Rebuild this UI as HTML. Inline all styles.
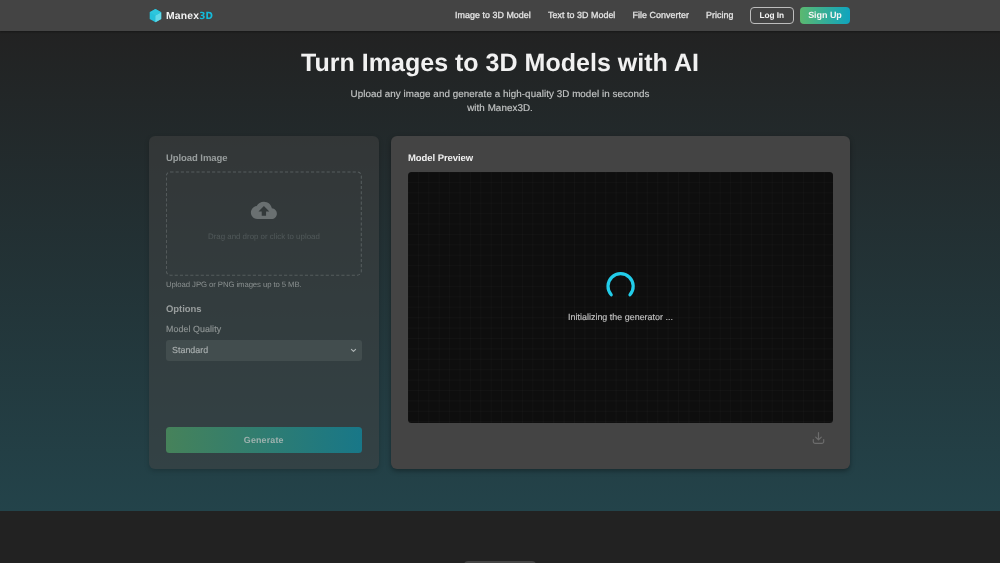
<!DOCTYPE html>
<html lang="en">
<head>
<meta charset="utf-8">
<title>Manex3D - Turn Images to 3D Models with AI</title>
<style>
*{box-sizing:border-box;margin:0;padding:0}
html,body{width:1000px;height:563px;overflow:hidden;background:#222222;font-family:"Liberation Sans",sans-serif;}
body{position:relative;will-change:transform;-webkit-font-smoothing:antialiased;text-rendering:geometricPrecision}
.header{position:absolute;left:0;top:0;width:1000px;height:31px;background:#444444;box-shadow:0 1px 2px rgba(0,0,0,.35);z-index:5}
.logo{position:absolute;left:149px;top:8px;width:14px;height:16px}
.brand{position:absolute;left:166px;top:9.5px;letter-spacing:.18px;height:13px;line-height:13px;font-size:10.35px;font-weight:700;color:#f2f2f2;white-space:nowrap}
.brand span{font-family:"DejaVu Sans Condensed","DejaVu Sans","Liberation Sans",sans-serif;color:#14bbdb;font-size:9.9px;letter-spacing:.05px;margin-left:.1px}
.nav a{position:absolute;top:9.4px;letter-spacing:.05px;height:13px;line-height:13px;font-size:8.9px;color:#e4e4e4;text-decoration:none;white-space:nowrap;font-weight:400;-webkit-text-stroke:.3px #e4e4e4;transform:translateY(.45px)}
.btn{position:absolute;top:7px;height:17px;border-radius:4px;font-size:9px;font-weight:700;line-height:15px;text-align:center;color:#f4f4f4}
.login{left:750px;width:43.6px;border:1px solid #bdbdbd;font-size:8.3px;word-spacing:-.2px;letter-spacing:-.03px}
.signup{left:800px;width:50px;background:linear-gradient(90deg,#5bb870,#0fa4bf);line-height:17px;letter-spacing:-.05px}
.hero{position:absolute;left:0;top:31px;width:1000px;height:480px;background:linear-gradient(180deg,#222222 0%,#23434a 100%)}
h1{position:absolute;left:0;top:47.4px;letter-spacing:.02px;width:1000px;text-align:center;font-size:25px;line-height:32px;font-weight:700;color:#f1f1f1;white-space:nowrap}
.sub{position:absolute;left:0;top:88px;-webkit-text-stroke:.15px #c4c6c6;width:1000px;text-align:center;font-size:9.8px;letter-spacing:.066px;line-height:14px;color:#c4c6c6}
.card{position:absolute;top:136px;height:333px;border-radius:6px;box-shadow:0 2px 5px rgba(0,0,0,.35)}
.left{left:149px;width:229.5px;background:rgba(68,68,68,.5);box-shadow:0 2px 5px rgba(0,0,0,.18)}
.right{left:391px;width:459px;background:#444444}
.ttl{position:absolute;left:17px;top:16px;font-size:9.5px;line-height:13px;font-weight:700;white-space:nowrap}
.left .ttl{color:#989d9d;letter-spacing:-.07px}
.right .ttl{color:#f0f0f0;letter-spacing:-.07px}
.drop{position:absolute;left:17px;top:35px;width:197px;height:106px}
.drop .dash{position:absolute;left:0;top:0;width:197px;height:106px}
.drop .cloud{position:absolute;left:84px;top:26px;width:28px;height:28px}
.drop p{position:absolute;left:-.1px;top:60.9px;width:196px;text-align:center;font-size:7.9px;line-height:10px;color:#51595a}
.hint{position:absolute;left:17px;top:143.9px;font-size:7.75px;letter-spacing:-.085px;line-height:10px;color:#8a9090;white-space:nowrap}
.opt{top:167px}
.lbl{position:absolute;left:17px;top:186.8px;font-size:8.9px;line-height:12px;color:#8e9494;white-space:nowrap;letter-spacing:.07px;-webkit-text-stroke:.15px #8e9494}
.sel{position:absolute;left:17px;top:204px;width:195.5px;height:21px;border-radius:3px;background:#424d4e;font-size:8.9px;line-height:21px;color:#a9afaf;padding-left:6.1px;-webkit-text-stroke:.15px #a9afaf}
.sel svg{position:absolute;left:183px;top:6px;width:9px;height:9px}
.gen{position:absolute;left:17px;top:291px;width:195.5px;height:25.5px;border-radius:3.5px;background:linear-gradient(90deg,#46825a,#187788);font-size:8.9px;font-weight:700;letter-spacing:.16px;line-height:26.4px;text-align:center;color:#9db1ae}
.canvas{position:absolute;left:17px;top:36px;width:425px;height:251px;border-radius:3.5px;background-color:#0e0e0e;
background-image:linear-gradient(90deg,rgba(255,255,255,.021) 1px,transparent 1px),linear-gradient(180deg,rgba(255,255,255,.021) 1px,transparent 1px);background-size:10.4167px 10.4167px;background-position:-.5px -.5px;overflow:hidden}
.spin{position:absolute;left:196px;top:98px;width:34px;height:34px}
.init{position:absolute;left:0;top:139.6px;width:100%;text-align:center;font-size:8.9px;letter-spacing:.03px;line-height:11px;color:#c2c2c2;-webkit-text-stroke:.15px #c2c2c2}
.dl{position:absolute;left:421px;top:295px;width:14px;height:14px}
.pill{position:absolute;left:464px;top:561px;width:72px;height:10px;border-radius:4px;background:#444444}
</style>
</head>
<body>
<div class="hero"></div>
<div class="header">
  <svg class="logo" viewBox="0 0 14 16"><g transform="translate(0.7,0.9) scale(0.4792,0.4926)"><polygon points="12,0 24,6.7 24,20.3 12,27 0,20.3 0,6.7" fill="#25c0da"/><polygon points="12,13.5 24,6.7 24,20.3 12,27" fill="#62d8e8"/><polygon points="12,0 24,6.7 12,13.5 0,6.7" fill="#2dc6dd"/></g></svg>
  <div class="brand">Manex<span>3D</span></div>
  <div class="nav">
    <a style="left:455px">Image to 3D Model</a>
    <a style="left:548px">Text to 3D Model</a>
    <a style="left:632.5px">File Converter</a>
    <a style="left:706px">Pricing</a>
  </div>
  <div class="btn login">Log In</div>
  <div class="btn signup">Sign Up</div>
</div>
<h1>Turn Images to 3D Models with AI</h1>
<div class="sub">Upload any image and generate a high-quality 3D model in seconds<br>with Manex3D.</div>

<div class="card left">
  <div class="ttl">Upload Image</div>
  <div class="drop">
    <svg class="dash" viewBox="0 0 197 106"><rect x="0.4" y="0.9" width="194.9" height="103.3" rx="4" fill="none" stroke="#565d5e" stroke-width="1.04" stroke-dasharray="3.125 2.083"/></svg>
    <svg class="cloud" viewBox="0 0 28 28"><g transform="translate(0.9,0.4) scale(1.0833)"><path fill="#6a7071" d="M19.35 10.04C18.67 6.59 15.64 4 12 4 9.11 4 6.6 5.64 5.35 8.04 2.34 8.36 0 10.91 0 14c0 3.31 2.69 6 6 6h13c2.76 0 5-2.24 5-5 0-2.64-2.05-4.78-4.65-4.96zM14 13v4h-4v-4H7l5-5 5 5h-3z"/></g></svg>
    <p>Drag and drop or click to upload</p>
  </div>
  <div class="hint">Upload JPG or PNG images up to 5 MB.</div>
  <div class="ttl opt">Options</div>
  <div class="lbl">Model Quality</div>
  <div class="sel">Standard<svg viewBox="0 0 9 9"><path d="M2.4 3.3L4.5 5.4 6.6 3.3" fill="none" stroke="#aeb5b5" stroke-width="1.1" stroke-linecap="round" stroke-linejoin="round"/></svg></div>
  <div class="gen">Generate</div>
</div>

<div class="card right">
  <div class="ttl">Model Preview</div>
  <div class="canvas">
    <svg class="spin" viewBox="0 0 34 34"><path d="M7.24 24.73A12.6 12.6 0 1 1 25.96 24.73" fill="none" stroke="#22cdea" stroke-width="3.2" stroke-linecap="round"/></svg>
    <div class="init">Initializing the generator ...</div>
  </div>
  <svg class="dl" viewBox="0 0 14 14"><g transform="translate(0,0.7)"><path d="M6.5 1v7M3.7 5.4l2.8 2.8 2.8-2.8M1.3 7.8v2a1.9 1.9 0 0 0 1.9 1.9h6.600a1.9 1.9 0 0 0 1.9-1.9v-2" fill="none" stroke="#6c6c6c" stroke-width="1.2" stroke-linecap="round" stroke-linejoin="round"/></g></svg>
</div>
<div class="pill"></div>
</body>
</html>
